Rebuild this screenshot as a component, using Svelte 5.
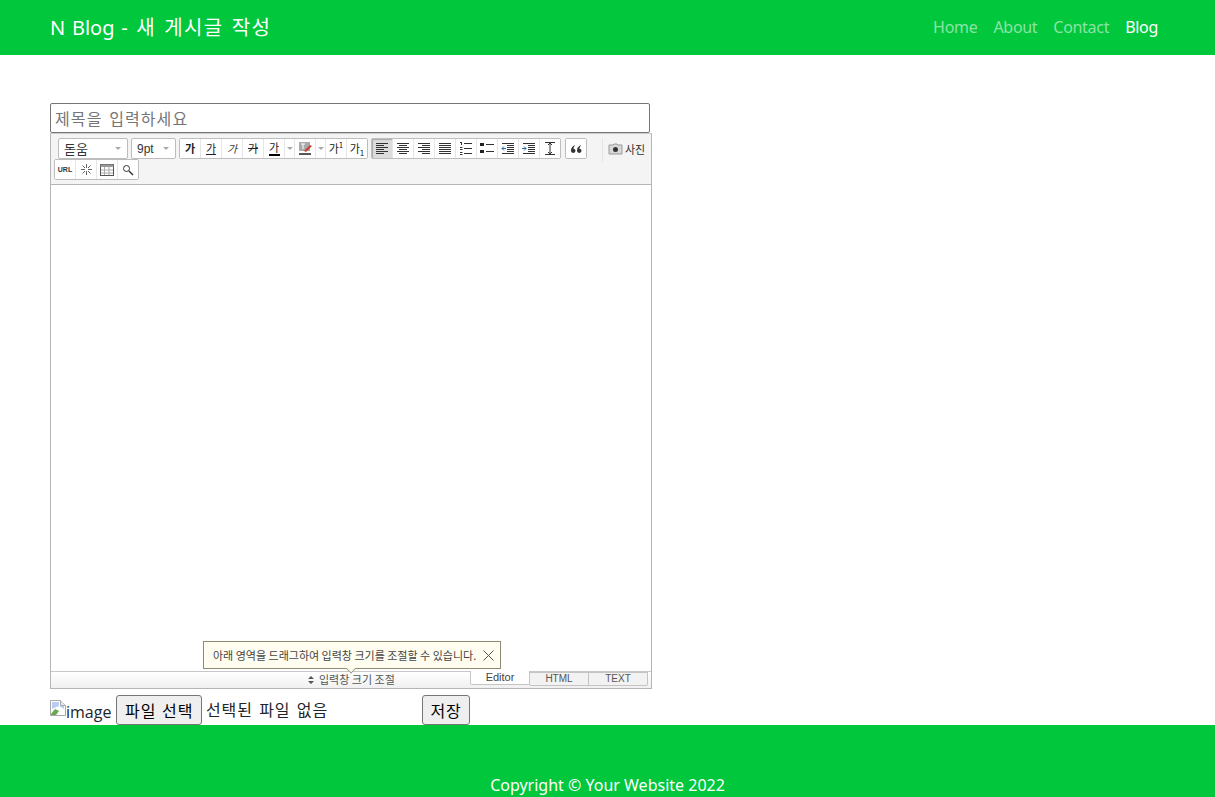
<script>
  // 새 게시글 작성 화면
  const navLinks = [
    { label: "Home", active: false },
    { label: "About", active: false },
    { label: "Contact", active: false },
    { label: "Blog", active: true }
  ];

  const alignLines = {
    left: [[1, 12], [1, 8], [1, 12], [1, 8], [1, 12], [1, 8]],
    center: [[1, 12], [3, 8], [1, 12], [3, 8], [1, 12], [3, 8]],
    right: [[1, 12], [5, 8], [1, 12], [5, 8], [1, 12], [5, 8]],
    full: [[1, 12], [1, 12], [1, 12], [1, 12], [1, 12], [1, 12]]
  };
  const aligns = ["left", "center", "right", "full"];
</script>

<div class="page">
  <nav class="navbar">
    <span class="brand">N Blog - <span class="brand-ko">새 게시글 작성</span></span>
    <ul class="nav-links">
      {#each navLinks as link}
        <li class:active={link.active}>{link.label}</li>
      {/each}
    </ul>
  </nav>

  <main class="content">
    <input class="title-input" type="text" placeholder="제목을 입력하세요" />

    <div class="editor">
      <div class="toolbar">
        <div class="tool-row first">
          <div class="select font-select"><span>돋움</span><i class="caret"></i></div>
          <div class="select size-select"><span>9pt</span><i class="caret"></i></div>

          <div class="group">
            <button class="tool glyph bold">가</button>
            <button class="tool glyph underline">가</button>
            <button class="tool glyph italic">가</button>
            <button class="tool glyph strike">가</button>
            <button class="tool glyph color">가<b class="color-bar"></b></button>
            <button class="tool arrow"><i class="caret"></i></button>
            <button class="tool">
              <svg width="15" height="15" viewBox="0 0 15 15">
                <rect x="1" y="1" width="11" height="9" fill="#a9a9a9" />
                <path d="M3 3h4M5 3v5" stroke="#fff" fill="none" />
                <path d="M6 10l6-6 2 1-6 6z" fill="#c8402f" />
                <rect x="1" y="12" width="12" height="2" fill="#555" />
              </svg>
            </button>
            <button class="tool arrow"><i class="caret"></i></button>
            <button class="tool glyph"><span>가<sup>1</sup></span></button>
            <button class="tool glyph"><span>가<sub>1</sub></span></button>
          </div>

          <div class="group">
            {#each aligns as name, i}
              <button class="tool" class:pressed={i === 0}>
                <svg width="14" height="11" viewBox="0 0 14 11">
                  {#each alignLines[name] as line, n}
                    <rect x={line[0]} y={n * 2} width={line[1]} height="1" fill="#333" />
                  {/each}
                </svg>
              </button>
            {/each}
            <button class="tool">
              <svg width="14" height="13" viewBox="0 0 14 13">
                <path d="M1 .5h2M2.500 0v3M1 5.500h2.500M1 7.500h2.500M1 10.500h2.500M1 12.500h2.500" stroke="#333" fill="none" />
                <path d="M5 1.500h8M5 6.500h8M5 11.500h8" stroke="#333" fill="none" />
              </svg>
            </button>
            <button class="tool">
              <svg width="14" height="13" viewBox="0 0 14 13">
                <rect x="0" y="1" width="4" height="3" fill="#222" />
                <rect x="0" y="8" width="4" height="3" fill="#222" />
                <path d="M6 2.500h8M6 9.500h8" stroke="#333" fill="none" />
              </svg>
            </button>
            <button class="tool">
              <svg width="14" height="11" viewBox="0 0 14 11">
                <path d="M1 .5h12M6 2.500h7M6 4.500h7M6 6.500h7M6 8.500h7M1 10.500h12" stroke="#333" fill="none" />
                <path d="M5 5.500H1M3 3.500l-2 2 2 2" stroke="#2b6cb0" fill="none" />
              </svg>
            </button>
            <button class="tool">
              <svg width="14" height="11" viewBox="0 0 14 11">
                <path d="M1 .5h12M6 2.500h7M6 4.500h7M6 6.500h7M6 8.500h7M1 10.500h12" stroke="#333" fill="none" />
                <path d="M0 5.500h4M2 3.500l2 2-2 2" stroke="#2b6cb0" fill="none" />
              </svg>
            </button>
            <button class="tool">
              <svg width="12" height="13" viewBox="0 0 12 13">
                <path d="M1 .5h10M1 12.500h10M6 1v11M4 3l2-2 2 2M4 10l2 2 2-2" stroke="#333" fill="none" />
              </svg>
            </button>
          </div>

          <div class="group quote">
            <button class="tool">
              <svg width="11" height="8" viewBox="0 0 11 8">
                <path d="M4 0C1.500 1 0 3 0 5.500 0 7 1 8 2.300 8 3.500 8 4.500 7 4.500 5.800 4.500 4.600 3.600 3.800 2.400 3.800 2.600 2.800 3.300 1.500 4 0zM10 0C7.500 1 6 3 6 5.500 6 7 7 8 8.300 8 9.500 8 10.500 7 10.500 5.800 10.500 4.600 9.600 3.800 8.400 3.800 8.600 2.800 9.300 1.500 10 0z" fill="#333" />
              </svg>
            </button>
          </div>

          <span class="divider"></span>

          <span class="photo">
            <svg width="15" height="12" viewBox="0 0 15 12">
              <path d="M1 2h4l1-1h3l1 1h4v9H1z" fill="#d8d8d8" stroke="#999" />
              <circle cx="7.500" cy="6.500" r="2.500" fill="#333" />
            </svg>
            사진
          </span>
        </div>

        <div class="tool-row">
          <div class="group">
            <button class="tool url">URL</button>
            <button class="tool">
              <svg width="13" height="13" viewBox="0 0 13 13">
                <path d="M6.500 1v4M6.500 8v4M1 6.500h4M8 6.500h4M2.500 2.500l2.500 2.500M8 8l2.500 2.500M10.500 2.500L8 5M5 8l-2.500 2.500" stroke="#666" fill="none" />
              </svg>
            </button>
            <button class="tool">
              <svg width="14" height="12" viewBox="0 0 14 12">
                <rect x=".5" y=".5" width="13" height="11" fill="#fff" stroke="#555" />
                <rect x=".5" y=".5" width="13" height="2.500" fill="#999" />
                <path d="M4.500 3v8M9 3v8M1 6h12M1 9h12" stroke="#aaa" fill="none" />
              </svg>
            </button>
            <button class="tool">
              <svg width="12" height="12" viewBox="0 0 12 12">
                <circle cx="4.500" cy="4.500" r="3" fill="#fff" stroke="#333" />
                <path d="M7 7l4 4" stroke="#333" stroke-width="1.500" fill="none" />
              </svg>
            </button>
          </div>
        </div>
      </div>

      <div class="editor-body"></div>

      <div class="resize-bar">
        <div class="tooltip">
          <span>아래 영역을 드래그하여 입력창 크기를 조절할 수 있습니다.</span>
          <svg width="11" height="11" viewBox="0 0 11 11">
            <path d="M.5 .5l10 10M10.500 .5l-10 10" stroke="#555" fill="none" />
          </svg>
          <i class="tooltip-tail"></i>
        </div>
        <span class="resize-label">
          <svg width="6" height="8" viewBox="0 0 6 8">
            <path d="M3 0l3 3H0zM3 8L0 5h6z" fill="#555" />
          </svg>
          입력창 크기 조절
        </span>
        <div class="tabs">
          <span class="tab current">Editor</span>
          <span class="tab">HTML</span>
          <span class="tab">TEXT</span>
        </div>
      </div>
    </div>

    <div class="form-row">
      <span class="broken-img">
        <svg width="16" height="16" viewBox="0 0 16 16">
          <path d="M.5 .5h10l5 5v10H.5z" fill="#fff" stroke="#a9a9a9" />
          <path d="M10.500 .5v5h5" fill="#e8e8e8" stroke="#a9a9a9" />
          <path d="M2 2h7v4h5v3L9 6 2 9z" fill="#b9cdf0" />
          <path d="M1 14l4-5 4 2-3 4H1z" fill="#6aa84f" />
        </svg>image
      </span>
      <button class="native file-btn">파일 선택</button>
      <span class="file-name">선택된 파일 없음</span>
      <button class="native save-btn">저장</button>
    </div>
  </main>

  <footer class="footer">Copyright © Your Website 2022</footer>
</div>

<style>
  :global(body) {
    font-family: "Open Sans", "Noto Sans CJK KR", sans-serif;
    color: #212529;
    background: #fff;
  }

  .page {
    height: 797px;
    overflow: hidden;
    display: flex;
    flex-direction: column;
  }

  .navbar {
    box-sizing: border-box;
    height: 55px;
    flex: none;
    background: #00c73c;
    display: flex;
    align-items: center;
    justify-content: space-between;
    padding: 0 57px 2px 50px;
  }

  .brand {
    color: #fff;
    font-size: 20px;
    font-family: "Noto Sans", "Noto Sans CJK KR", sans-serif;
    word-spacing: 1.5px;
  }

  .brand-ko {
    margin-left: 2px;
    letter-spacing: 1.4px;
  }

  .nav-links {
    display: flex;
    gap: 16px;
    list-style: none;
    margin: 0;
    padding: 0;
    font-size: 16px;
    font-family: "Noto Sans", sans-serif;
    letter-spacing: -0.3px;
    color: rgba(255, 255, 255, 0.55);
  }

  .nav-links .active {
    color: #fff;
  }

  .content {
    flex: 1;
    padding: 48px 0 0 50px;
    font-family: "Noto Sans CJK KR", sans-serif;
  }

  .title-input {
    display: block;
    box-sizing: border-box;
    width: 600px;
    height: 30px;
    padding: 0 4px;
    margin: 0;
    border: 1px solid #767676;
    border-radius: 2px;
    font-size: 16px;
    font-family: "Noto Sans CJK KR", sans-serif;
    letter-spacing: 1.1px;
    word-spacing: 2px;
    background: #fff;
  }

  .title-input::placeholder {
    color: #757575;
  }

  .editor {
    box-sizing: border-box;
    width: 602px;
    height: 556px;
    border: 1px solid #b5b5b5;
    border-top-color: #ccc;
    display: flex;
    flex-direction: column;
    font-family: "Noto Sans CJK KR", sans-serif;
  }

  .toolbar {
    box-sizing: border-box;
    flex: none;
    height: 51px;
    padding: 4px 0 0 3px;
    background: #f4f4f4;
    border-bottom: 1px solid #b5b5b5;
  }

  .tool-row {
    display: flex;
    height: 21px;
    gap: 3px;
  }

  .tool-row.first {
    padding-left: 4px;
  }

  .select,
  .group {
    box-sizing: border-box;
    height: 21px;
    display: flex;
    background: #fff;
    border: 1px solid #bdbdbd;
    border-radius: 2px;
  }

  .group.quote {
    margin-left: 1px;
  }

  .select {
    align-items: center;
    justify-content: space-between;
    padding: 0 6px 0 5px;
    font-size: 13px;
    color: #333;
  }

  .font-select {
    width: 70px;
  }

  .size-select {
    width: 45px;
    font-size: 12px;
    font-family: "Liberation Sans", sans-serif;
  }

  .caret {
    display: block;
    width: 0;
    height: 0;
    border-left: 3px solid transparent;
    border-right: 3px solid transparent;
    border-top: 3px solid #aaa;
  }

  .tool {
    box-sizing: border-box;
    position: relative;
    width: 21px;
    height: 19px;
    padding: 0;
    border: 0;
    border-right: 1px solid #e6e6e6;
    background: #fff;
    display: flex;
    align-items: center;
    justify-content: center;
    font-size: 11px;
    line-height: 1;
    color: #222;
    font-family: "Noto Sans CJK KR", sans-serif;
  }

  .tool:last-child {
    width: 20px;
    border-right: 0;
  }

  .tool.arrow {
    width: 10px;
  }

  .tool.pressed {
    background: #dcdcdc;
    box-shadow: inset 1px 1px 1px #aaa;
  }

  .glyph.bold {
    font-weight: 700;
  }

  .glyph.underline {
    text-decoration: underline;
  }

  .glyph.italic {
    font-style: italic;
    color: #444;
  }

  .glyph.strike {
    text-decoration: line-through;
  }

  .glyph.color {
    padding-bottom: 3px;
  }

  .color-bar {
    position: absolute;
    left: 5px;
    bottom: 2px;
    width: 11px;
    height: 2px;
    background: #000;
  }

  .glyph sup,
  .glyph sub {
    font-size: 8px;
    line-height: 0;
  }

  .tool.url {
    font-size: 7px;
    font-weight: 700;
    font-family: "Liberation Sans", sans-serif;
    color: #333;
  }

  .divider {
    width: 1px;
    height: 24px;
    margin: 0 2px 0 12px;
    background: #e4e4e4;
  }

  .photo {
    display: flex;
    align-items: center;
    gap: 2px;
    font-size: 11px;
    color: #333;
    height: 21px;
    white-space: nowrap;
  }

  .editor-body {
    flex: 1;
    background: #fff;
  }

  .resize-bar {
    position: relative;
    flex: none;
    height: 17px;
    box-sizing: border-box;
    border-top: 1px solid #c8c8c8;
    background: linear-gradient(#fff, #f0f0f0);
    font-size: 11px;
    color: #555;
  }

  .resize-label {
    position: absolute;
    left: 257px;
    top: 0;
    line-height: 15px;
    display: flex;
    align-items: center;
    gap: 5px;
  }

  .tooltip {
    position: absolute;
    left: 152px;
    top: -31px;
    box-sizing: border-box;
    width: 298px;
    height: 28px;
    padding: 0 6px 0 9px;
    display: flex;
    align-items: center;
    justify-content: space-between;
    background: #fffdef;
    border: 1px solid #8f8a72;
    color: #444;
    font-size: 11px;
    white-space: nowrap;
    z-index: 2;
  }

  .tooltip-tail {
    position: absolute;
    left: 143px;
    bottom: -5px;
    width: 7px;
    height: 7px;
    background: #fffdef;
    border-right: 1px solid #8f8a72;
    border-bottom: 1px solid #8f8a72;
    transform: rotate(45deg) scale(0.8);
  }

  .tabs {
    position: absolute;
    left: 419px;
    top: 0;
    display: flex;
    height: 14px;
  }

  .tab {
    box-sizing: border-box;
    width: 59px;
    height: 14px;
    text-align: center;
    font-size: 10px;
    line-height: 12px;
    font-family: "Liberation Sans", sans-serif;
    background: #f2f2f2;
    border: 1px solid #c4c4c4;
    border-left: 0;
    color: #555;
  }

  .tab:last-child {
    border-radius: 0 0 2px 0;
  }

  .tab.current {
    width: 60px;
    margin-top: -1px;
    background: #fff;
    border-top: 0;
    border-left: 1px solid #c4c4c4;
    border-radius: 0 0 0 2px;
    color: #444;
    font-size: 11px;
    line-height: 12px;
  }

  .form-row {
    display: flex;
    align-items: center;
    height: 36px;
    font-size: 16px;
    letter-spacing: 1px;
    word-spacing: 1.5px;
    color: #212529;
  }

  .broken-img {
    display: flex;
    align-items: flex-start;
    margin-top: 9px;
    margin-right: 5px;
    letter-spacing: 0;
    font-family: "Open Sans", sans-serif;
  }

  .broken-img svg {
    margin-top: -1px;
  }

  .native {
    box-sizing: border-box;
    height: 30px;
    padding: 0 7.5px;
    margin: 6px 0 0;
    border: 1px solid #767676;
    border-radius: 3px;
    background: #efefef;
    font-size: 16px;
    letter-spacing: 1px;
    word-spacing: 1px;
    font-family: "Noto Sans CJK KR", sans-serif;
    color: #000;
  }

  .file-name {
    margin: 4px 0 0 4px;
    width: 216px;
  }

  .footer {
    box-sizing: border-box;
    flex: none;
    height: 72px;
    padding-top: 48px;
    background: #00c73c;
    color: #fff;
    font-size: 16px;
    line-height: 24px;
    text-align: center;
    font-family: "Noto Sans", sans-serif;
  }
</style>
